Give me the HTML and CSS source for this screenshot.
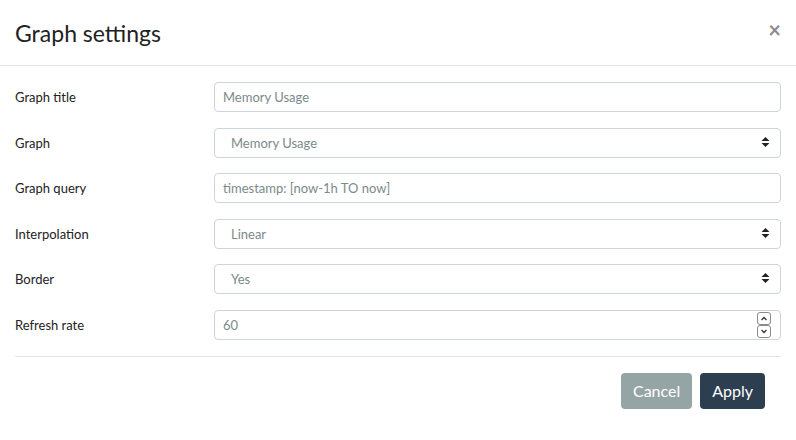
FILE: index.html
```html
<!DOCTYPE html>
<html>
<head>
<meta charset="utf-8">
<link rel="stylesheet" href="styles.css">
</head>
<body>
<div class="modal">
  <div class="modal-header">
    <h4 class="modal-title">Graph settings</h4>
    <span class="close">×</span>
  </div>
  <div class="modal-body">
    <div class="form">
      <label class="label">Graph title</label>
      <div class="control input placeholder">Memory Usage</div>

      <label class="label">Graph</label>
      <div class="control select"><span>Memory Usage</span>
        <svg class="caret" width="9" height="12" viewBox="0 0 9 12"><path d="M4.5 1 L8.5 5 L0.5 5 Z M0.5 7 L8.5 7 L4.5 11 Z" fill="#222"/></svg>
      </div>

      <label class="label">Graph query</label>
      <div class="control input placeholder">timestamp: [now-1h TO now]</div>

      <label class="label">Interpolation</label>
      <div class="control select"><span>Linear</span>
        <svg class="caret" width="9" height="12" viewBox="0 0 9 12"><path d="M4.5 1 L8.5 5 L0.5 5 Z M0.5 7 L8.5 7 L4.5 11 Z" fill="#222"/></svg>
      </div>

      <label class="label">Border</label>
      <div class="control select"><span>Yes</span>
        <svg class="caret" width="9" height="12" viewBox="0 0 9 12"><path d="M4.5 1 L8.5 5 L0.5 5 Z M0.5 7 L8.5 7 L4.5 11 Z" fill="#222"/></svg>
      </div>

      <label class="label">Refresh rate</label>
      <div class="control input number"><span class="placeholder">60</span>
        <svg class="spin" width="14" height="26" viewBox="0 0 14 26">
          <rect x="0.5" y="0.5" width="13" height="12" rx="2.5" fill="#fff" stroke="#8a8a8a"/>
          <rect x="0.5" y="13.5" width="13" height="12" rx="2.5" fill="#fff" stroke="#8a8a8a"/>
          <path d="M4.5 8 L7 5.5 L9.5 8" fill="none" stroke="#333" stroke-width="1.3"/>
          <path d="M4.5 18 L7 20.5 L9.5 18" fill="none" stroke="#333" stroke-width="1.3"/>
        </svg>
      </div>
    </div>
    <div class="modal-footer">
      <button class="btn btn-cancel">Cancel</button>
      <button class="btn btn-apply">Apply</button>
    </div>
  </div>
</div>
</body>
</html>
```
FILE: styles.css
```css
html, body {
  margin: 0;
  padding: 0;
  background: #fff;
}
body {
  font-family: Lato, "Open Sans", sans-serif;
  color: #222;
}
.modal {
  width: 796px;
}
.modal-header {
  display: flex;
  align-items: center;
  justify-content: space-between;
  height: 66px;
  box-sizing: border-box;
  padding: 0 15px;
  border-bottom: 1px solid #e5e5e5;
}
.modal-title {
  margin: 0;
  font-size: 23px;
  font-weight: 400;
  color: #222;
  line-height: 1;
  padding-top: 1px;
}
.close {
  font-size: 22px;
  font-weight: 700;
  color: #8c8c8c;
  line-height: 1;
  margin-right: 0;
  margin-top: -5px;
}
.modal-body {
  padding: 16px 15px 0 15px;
}
.form {
  display: grid;
  grid-template-columns: 199px 1fr;
  row-gap: 15.6px;
  align-items: center;
}
.label {
  font-size: 13px;
  color: #222;
}
.control {
  height: 30px;
  box-sizing: border-box;
  border: 1px solid #cfd4d9;
  border-radius: 4px;
  font-size: 13px;
  display: flex;
  align-items: center;
  color: #7b8a8b;
}
.input {
  padding: 0 8px;
}
.placeholder {
  color: #7b8a8b;
}
.select {
  padding: 0 10px 0 16px;
  justify-content: space-between;
  color: #7b8a8b;
}
.caret {
  display: block;
  margin-top: -2px;
}
.number {
  justify-content: space-between;
  padding: 0 8px 0 8px;
}
.spin {
  display: block;
  margin-right: 1px;
}
.modal-footer {
  margin-top: 16px;
  border-top: 1px solid #e5e5e5;
  padding: 16px 16px 30px 0;
  display: flex;
  justify-content: flex-end;
  gap: 8px;
}
.btn {
  font-family: Lato, "Open Sans", sans-serif;
  font-size: 16px;
  color: #fff;
  border: none;
  border-radius: 4px;
  height: 36px;
  padding: 0 12px;
  line-height: 36px;
}
.btn-cancel {
  background: #95a5a6;
}
.btn-apply {
  background: #2c3e50;
}
```
